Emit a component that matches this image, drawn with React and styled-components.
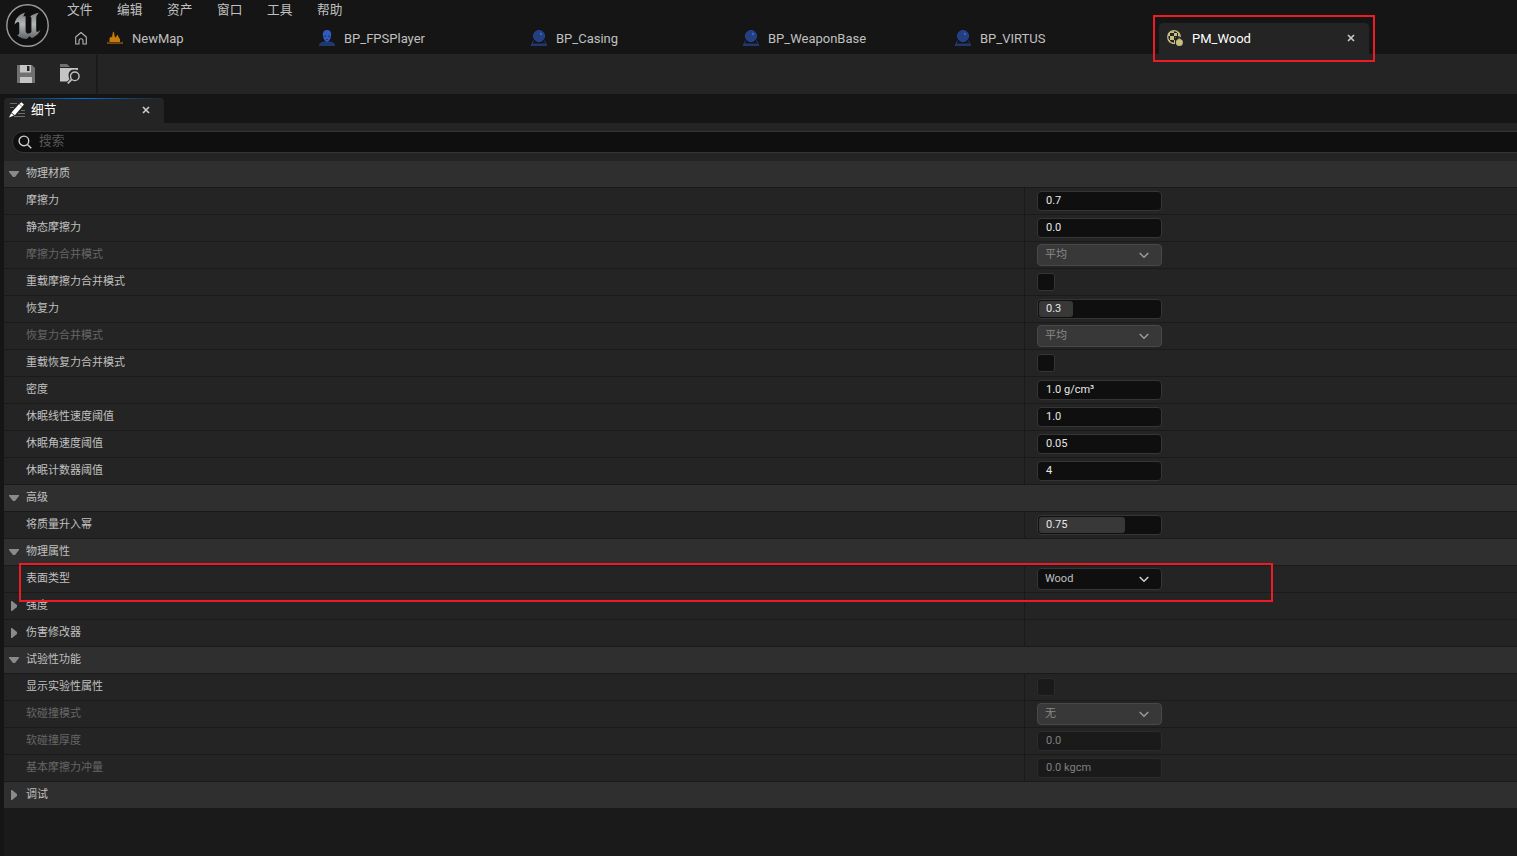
import styled, { createGlobalStyle, css } from "styled-components";

const GlobalStyle = createGlobalStyle`
  * { box-sizing: border-box; }
  body {
    margin: 0;
    background: #151515;
    overflow: hidden;
    font-family: Roboto, "Noto Sans CJK SC", sans-serif;
  }
`;

const Window = styled.div`
  width: 100%;
  height: 100vh;
  display: flex;
  flex-direction: column;
  overflow: hidden;
  color: #c0c0c0;
`;

const TitleBar = styled.header`
  height: 54px;
  display: flex;
  flex: none;
`;

const LogoBox = styled.div`
  width: 67px;
  padding: 4px 0 0 5px;
  flex: none;
`;

const TitleColumn = styled.div`
  display: flex;
  flex-direction: column;
  flex: 1;
`;

const Menu = styled.nav`
  display: flex;
  height: 23px;
`;

const MenuItem = styled.span`
  width: 50px;
  font-size: 12.7px;
  line-height: 20px;
`;

const Tabs = styled.div`
  display: flex;
  gap: 2px;
  height: 31px;
`;

const HomeButton = styled.div`
  width: 30px;
  padding: 7px 0 0 7px;
`;

const Tab = styled.div`
  position: relative;
  display: flex;
  align-items: center;
  width: 210px;
  padding: 0 14px 1px 8px;
  border-radius: 4px 4px 0 0;
  background: ${(props) => (props.$active ? "#242424" : "transparent")};
  color: ${(props) => (props.$active ? "#ffffff" : "#c0c0c0")};
`;

const TabLabel = styled.span`
  flex: 1;
  margin-left: 9px;
  padding-top: 2px;
  font-size: 13px;
  line-height: 16px;
`;

const TabHighlight = styled.div`
  position: absolute;
  inset: -8px -6px -8px -6px;
  border: 2px solid #ed1c24;
  z-index: 2;
`;

const Toolbar = styled.div`
  height: 40px;
  display: flex;
  align-items: center;
  flex: none;
  padding-left: 16px;
  gap: 23px;
  background: #242424;
`;

const ToolbarDivider = styled.div`
  width: 2px;
  height: 38px;
  margin-left: -7px;
  background: #1a1a1a;
`;

const PanelTabs = styled.div`
  height: 29px;
  flex: none;
  padding: 4px 0 0 4px;
`;

const PanelTab = styled.div`
  position: relative;
  display: flex;
  align-items: center;
  width: 160px;
  height: 25px;
  padding: 0 14px 2px 5px;
  border-radius: 4px 4px 0 0;
  background: #242424;
  color: #ffffff;
  overflow: hidden;

  &::before {
    content: "";
    position: absolute;
    top: 0;
    left: 0;
    right: 0;
    height: 1px;
    background: linear-gradient(90deg, #242424, #0070e0 50%, #242424);
  }
`;

const PanelTitle = styled.span`
  flex: 1;
  margin-left: 6px;
  padding-top: 1px;
  font-size: 12.7px;
  line-height: 18px;
`;

const Panel = styled.section`
  flex: 1;
  margin-left: 4px;
  background: #1a1a1a;
`;

const SearchArea = styled.div`
  height: 38px;
  padding: 8px 0 0 8px;
  background: #242424;
`;

const SearchBox = styled.div`
  display: flex;
  align-items: center;
  height: 22px;
  margin-right: -2px;
  padding-left: 5px;
  gap: 7px;
  border: 1px solid #353535;
  border-radius: 11px 0 0 11px;
  background: #0f0f0f;
`;

const Placeholder = styled.span`
  font-size: 12.7px;
  line-height: 18px;
  padding-bottom: 2px;
  color: #575757;
`;

const Row = styled.div`
  position: relative;
  display: flex;
  height: 27px;
  border-bottom: 1px solid #1a1a1a;
  background: ${(props) => (props.$header ? "#2f2f2f" : "#242424")};
`;

const NameCell = styled.div`
  display: flex;
  width: 1021px;
  border-right: 1px solid ${(props) => (props.$header ? "transparent" : "#1a1a1a")};
`;

const ArrowSlot = styled.div`
  display: flex;
  align-items: center;
  justify-content: center;
  width: 20px;
  margin-right: 2px;
`;

const Name = styled.span`
  font-size: 11px;
  line-height: 26px;
  color: ${(props) => (props.$disabled ? "#666666" : "#c0c0c0")};
`;

const ValueCell = styled.div`
  display: flex;
  align-items: center;
  padding-left: 12px;
`;

const fieldFrame = css`
  width: 125px;
  border: 1px solid #353535;
  border-radius: 4px;
  font-size: 11px;
`;

const NumberField = styled.div`
  ${fieldFrame}
  position: relative;
  height: 20px;
  padding: 1px;
  background: ${(props) => (props.$disabled ? "#1a1a1a" : "#0f0f0f")};
  border-color: ${(props) => (props.$disabled ? "#2b2b2b" : "#353535")};
  color: ${(props) => (props.$disabled ? "#808080" : "#e8e8e8")};
`;

const Fill = styled.div`
  height: 16px;
  border-radius: 3px;
  background: #383838;
`;

const NumberText = styled.span`
  position: absolute;
  left: 8px;
  top: 0;
  line-height: 17px;
`;

const Select = styled.div`
  ${fieldFrame}
  display: flex;
  justify-content: space-between;
  align-items: center;
  height: 22px;
  padding: 0 12px 0 7px;
  background: ${(props) => (props.$disabled ? "#383838" : "#0f0f0f")};
  border-color: ${(props) => (props.$disabled ? "#484848" : "#353535")};
  color: ${(props) => (props.$disabled ? "#8a8a8a" : "#c0c0c0")};
`;

const SelectText = styled.span`
  line-height: 20px;
`;

const Checkbox = styled.div`
  width: 18px;
  height: 18px;
  border: 1px solid ${(props) => (props.$disabled ? "#2b2b2b" : "#353535")};
  border-radius: 3px;
  background: ${(props) => (props.$disabled ? "#1a1a1a" : "#0f0f0f")};
`;

const RowHighlight = styled.div`
  position: absolute;
  left: 15px;
  top: -3px;
  width: 1254px;
  height: 39px;
  border: 2px solid #ed1c24;
  z-index: 2;
`;

const UnrealLogo = () => (
  <svg width="45" height="44" viewBox="0 0 45 44">
    <defs>
      <linearGradient id="metal" x1="0" y1="0" x2="0" y2="1">
        <stop offset="0" stopColor="#7d8283" />
        <stop offset="0.45" stopColor="#b4b7b8" />
        <stop offset="1" stopColor="#5c6366" />
      </linearGradient>
    </defs>
    <circle cx="22.5" cy="21.5" r="20.7" fill="#101010" stroke="#9b9b9b" strokeWidth="1.4" />
    <path
      fill="url(#metal)"
      d="M20.3 8.6C14 10.5 10.3 14.5 9.6 20.6c1.4-2 2.7-2.8 3.7-2.6.9.2 1 1 1 2v8.500c0 1.500-.7 2.300-2.300 2.500 2.500 2.700 6 4 9.700 4l2.800-2.800 2.500 2c4-1.900 7-4.600 8.400-8.200-1.600 1.400-3 2.100-3.700 1.800-.4-.2-.5-.6-.5-1.200V14c.1-2 1.100-3.500 2.800-5.200-3.500.6-7 1.800-9 3.800 1 .1 1.400.8 1.400 1.900V28c-.9 1-1.900 1.600-3 1.600-1.800 0-2.800-1.100-2.800-3.100v-13c0-2.200-.6-1.700-2-.8 0-1.500.6-3 1.700-4.100z"
    />
  </svg>
);

const HomeIcon = () => (
  <svg width="14" height="14" viewBox="0 0 14 14" fill="none" stroke="#b4b4b4" strokeWidth="1.1">
    <path d="M1.700 6 7 1.500 12.300 6v7H9V9.800a2 2 0 0 0-4 0V13H1.700z" strokeLinejoin="round" />
  </svg>
);

const MapIcon = () => (
  <svg width="16" height="16" viewBox="0 0 16 16">
    <path d="M2.500 12V8.500L4 6.500l1 1L6 1.500l1 1 1 5 1-.5 1.500-2.500L12 8l1 1v3z" fill="#c67c08" />
    <path d="M0 11v3h16v-3l-1 1.200H1z" fill="#74490d" />
  </svg>
);

const PawnIcon = () => (
  <svg width="16" height="16" viewBox="0 0 16 16">
    <path d="M0 16c0-3 2.500-4.300 5-4.500h6c2.500.2 5 1.500 5 4.500z" fill="#20386f" />
    <path d="M8 0c2.900 0 4.400 1.900 4.200 4.600l-.5 3C11.300 9.500 9.500 12 8 12S4.700 9.500 4.300 7.600l-.5-3C3.600 1.900 5.100 0 8 0z" fill="#2e5bbd" />
    <path d="M5.500 5.800H7v1.100H5.500zM9 5.800h1.500v1.100H9zM7 9h2v.8H7z" fill="#1b3166" />
  </svg>
);

const ActorIcon = () => (
  <svg width="16" height="16" viewBox="0 0 16 16">
    <path d="M2.500 10.500 1 14h14l-1.500-3.500" fill="none" stroke="#20386f" strokeWidth="1" />
    <path d="M0 14h16v2H0z" fill="#20386f" />
    <circle cx="8" cy="6" r="5.500" fill="#243f7e" stroke="#2747a0" strokeWidth="1" />
    <circle cx="10" cy="4" r="1.200" fill="#3565c8" />
  </svg>
);

const MaterialIcon = () => (
  <svg width="16" height="16" viewBox="0 0 16 16">
    <circle cx="7" cy="7" r="6.300" fill="none" stroke="#c8bd80" strokeWidth="1.300" />
    <path
      d="M3 2l4-1v2H3zM1 3h2v3H1zM7 3h3v3H7zM3 6h4v4H3zM10 1.500 13 4v2h-2V3h-1zM1 10h2v3zM7 10h1v4H5v-1h2z"
      fill="#c8bd80"
    />
    <path d="M8 7h8v9H8z" fill="#242424" />
    <path d="M8 7.500h1M11 7h2M11.500 8.500h2" stroke="#6f6a4d" />
    <circle cx="12.400" cy="12.400" r="3.500" fill="#c8bd80" />
  </svg>
);

const SaveIcon = () => (
  <svg width="20" height="20" viewBox="0 0 20 20">
    <path d="M1 1h15l3 3v15H1z" fill="#707070" />
    <path d="M4 1h11v7.500H4zM4 13h12v6H4z" fill="#c4c4c4" />
    <path d="M11 2h2.500v5H11z" fill="#242424" />
  </svg>
);

const BrowseIcon = () => (
  <svg width="21" height="20" viewBox="0 0 21 20">
    <path d="M1 0h7l3 3H1z" fill="#707070" />
    <path d="M1 4h18v1.500H1z" fill="#b0b0b0" />
    <path d="M1 4h18v2.200c-5-2.500-10 .8-9.400 5.800.1 1.500.4 2.300 1 3.200L8 17.500H1z" fill="#c4c4c4" />
    <circle cx="15.800" cy="12.300" r="4.300" fill="#242424" stroke="#c4c4c4" strokeWidth="1.400" />
    <path d="m12.800 15.400-4 4" stroke="#c4c4c4" strokeWidth="1.700" />
  </svg>
);

const DetailsIcon = () => (
  <svg width="16" height="16" viewBox="0 0 16 16">
    <path d="M1 1.500h7M1 5.500h4M12 8.500h4M9 11.500h7M5 14.500h11" stroke="#6e6e6e" strokeWidth="1" />
    <path d="M10.500 1.800 12.500.2l2.400 2.200-1.600 2zM10.100 2.100l3 2.700-7.300 8.500-3.300-2.900zM2.200 11.200l2.700 2.400L0 15.500z" fill="#ffffff" />
  </svg>
);

const SearchIcon = () => (
  <svg width="14" height="14" viewBox="0 0 14 14" fill="none" stroke="#d0d0d0" strokeWidth="1.400">
    <circle cx="5.900" cy="5.900" r="4.800" />
    <path d="m9.400 9.400 3.900 3.900" />
  </svg>
);

const CloseIcon = () => (
  <svg width="8" height="8" viewBox="0 0 8 8" stroke="#c8c8c8" strokeWidth="1.700">
    <path d="m1 1 6 6M7 1 1 7" />
  </svg>
);

const ChevronIcon = ({ color }) => (
  <svg width="10" height="7" viewBox="0 0 10 7" fill="none" stroke={color} strokeWidth="1.500">
    <path d="m.7 1 4.300 4.300L9.300 1" />
  </svg>
);

const Arrow = ({ open }) => (
  <svg width="10" height="12" viewBox="0 0 10 12" fill="#8a8a8a">
    {open ? <path d="M0 3h10v1L6 9H4L0 4z" /> : <path d="M2 1h1l5 4v2L3 11H2z" />}
  </svg>
);

const menuItems = ["文件", "编辑", "资产", "窗口", "工具", "帮助"];

const tabs = [
  { label: "NewMap", icon: <MapIcon /> },
  { label: "BP_FPSPlayer", icon: <PawnIcon /> },
  { label: "BP_Casing", icon: <ActorIcon /> },
  { label: "BP_WeaponBase", icon: <ActorIcon /> },
  { label: "BP_VIRTUS", icon: <ActorIcon /> },
  { label: "PM_Wood", icon: <MaterialIcon />, active: true },
];

const rows = [
  { name: "物理材质", header: true, open: true },
  { name: "摩擦力", type: "number", value: "0.7" },
  { name: "静态摩擦力", type: "number", value: "0.0" },
  { name: "摩擦力合并模式", type: "select", value: "平均", disabled: true },
  { name: "重载摩擦力合并模式", type: "check" },
  { name: "恢复力", type: "number", value: "0.3", fill: 0.3 },
  { name: "恢复力合并模式", type: "select", value: "平均", disabled: true },
  { name: "重载恢复力合并模式", type: "check" },
  { name: "密度", type: "number", value: "1.0 g/cm³" },
  { name: "休眠线性速度阈值", type: "number", value: "1.0" },
  { name: "休眠角速度阈值", type: "number", value: "0.05" },
  { name: "休眠计数器阈值", type: "number", value: "4" },
  { name: "高级", header: true, open: true },
  { name: "将质量升入幂", type: "number", value: "0.75", fill: 0.75 },
  { name: "物理属性", header: true, open: true },
  { name: "表面类型", type: "select", value: "Wood", highlight: true },
  { name: "强度", expandable: true },
  { name: "伤害修改器", expandable: true },
  { name: "试验性功能", header: true, open: true },
  { name: "显示实验性属性", type: "check", lockedValue: true },
  { name: "软碰撞模式", type: "select", value: "无", disabled: true },
  { name: "软碰撞厚度", type: "number", value: "0.0", disabled: true },
  { name: "基本摩擦力冲量", type: "number", value: "0.0 kgcm", disabled: true },
  { name: "调试", header: true },
];

const Value = ({ row }) => {
  if (row.type === "number") {
    return (
      <NumberField $disabled={row.disabled}>
        {row.fill && <Fill style={{ width: Math.floor(row.fill * 115) }} />}
        <NumberText>{row.value}</NumberText>
      </NumberField>
    );
  }
  if (row.type === "select") {
    return (
      <Select $disabled={row.disabled}>
        <SelectText>{row.value}</SelectText>
        <ChevronIcon color={row.disabled ? "#9a9a9a" : "#d0d0d0"} />
      </Select>
    );
  }
  if (row.type === "check") {
    return <Checkbox $disabled={row.lockedValue} />;
  }
  return null;
};

const PropertyRow = ({ row }) => (
  <Row $header={row.header}>
    <NameCell $header={row.header}>
      <ArrowSlot>{(row.header || row.expandable) && <Arrow open={row.open} />}</ArrowSlot>
      <Name $disabled={row.disabled}>{row.name}</Name>
    </NameCell>
    <ValueCell>
      <Value row={row} />
    </ValueCell>
    {row.highlight && <RowHighlight />}
  </Row>
);

const App = () => {
  return (
    <Window>
      <GlobalStyle />
      <TitleBar>
        <LogoBox>
          <UnrealLogo />
        </LogoBox>
        <TitleColumn>
          <Menu>
            {menuItems.map((item) => (
              <MenuItem key={item}>{item}</MenuItem>
            ))}
          </Menu>
          <Tabs>
            <HomeButton>
              <HomeIcon />
            </HomeButton>
            {tabs.map((tab) => (
              <Tab key={tab.label} $active={tab.active}>
                {tab.icon}
                <TabLabel>{tab.label}</TabLabel>
                {tab.active && <CloseIcon />}
                {tab.active && <TabHighlight />}
              </Tab>
            ))}
          </Tabs>
        </TitleColumn>
      </TitleBar>
      <Toolbar>
        <SaveIcon />
        <BrowseIcon />
        <ToolbarDivider />
      </Toolbar>
      <PanelTabs>
        <PanelTab>
          <DetailsIcon />
          <PanelTitle>细节</PanelTitle>
          <CloseIcon />
        </PanelTab>
      </PanelTabs>
      <Panel>
        <SearchArea>
          <SearchBox>
            <SearchIcon />
            <Placeholder>搜索</Placeholder>
          </SearchBox>
        </SearchArea>
        {rows.map((row) => (
          <PropertyRow key={row.name} row={row} />
        ))}
      </Panel>
    </Window>
  );
};

export default App;
